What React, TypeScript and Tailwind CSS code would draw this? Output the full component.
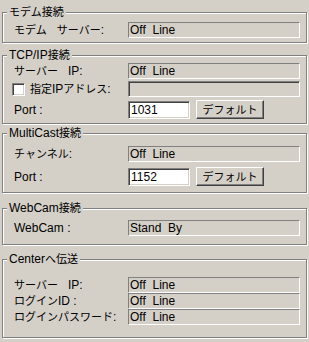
import React from 'react';

const sunken1 = 'border border-t-[#808080] border-l-[#808080] border-b-white border-r-white';
const sunken2 =
  'border border-t-[#808080] border-l-[#808080] border-b-white border-r-white shadow-[inset_1px_1px_0_#404040,inset_-1px_-1px_0_#d4d0c8]';

// kana/kanji runs are set a bit smaller so they sit as narrow as the original UI font
function Jp({ text }: { text: string }) {
  const parts = text.split(/([\u3000-\u9fff\uff00-\uffef]+)/);
  return (
    <>
      {parts.map((p, i) =>
        /[\u3000-\u9fff\uff00-\uffef]/.test(p) ? (
          <span key={i} className="text-[11px]">
            {p}
          </span>
        ) : (
          <React.Fragment key={i}>{p}</React.Fragment>
        )
      )}
    </>
  );
}

function Group({
  title,
  className,
  children,
}: {
  title: string;
  className: string;
  children: React.ReactNode;
}) {
  return (
    <fieldset
      className={`mx-[2px] border border-[#808080] shadow-[inset_1px_1px_0_#fff,1px_1px_0_#fff] ${className}`}
    >
      <legend className="ml-[4px] px-[2px] bg-[#d4d0c8] leading-[14px]">
        <Jp text={title} />
      </legend>
      {children}
    </fieldset>
  );
}

// read-only status box ("Off  Line")
function Status({ text }: { text: string }) {
  return (
    <div className={`w-[172px] h-[16px] ${sunken1} pl-[1px] leading-[14px] whitespace-pre`}>{text}</div>
  );
}

function Row({ label, children, className = '' }: { label: string; children: React.ReactNode; className?: string }) {
  return (
    <div className={`flex items-center pl-[11px] ${className}`}>
      <span className="w-[114px] leading-[14px] whitespace-pre">
        <Jp text={label} />
      </span>
      {children}
    </div>
  );
}

function PortRow({ value, className }: { value: string; className: string }) {
  return (
    <Row label="Port :" className={className}>
      <div className={`w-[62px] h-[18px] bg-white ${sunken2} pl-[2px] leading-[16px]`}>{value}</div>
      <button className="ml-[6px] w-[68px] h-[19px] bg-[#d4d0c8] border border-t-white border-l-white border-b-[#404040] border-r-[#404040] shadow-[inset_-1px_-1px_0_#808080] leading-[16px] text-center text-[11px]">
        デフォルト
      </button>
    </Row>
  );
}

export default function App() {
  return (
    <div className="w-[309px] h-[342px] bg-[#d4d0c8] text-black text-[12px] font-['Liberation_Sans','Noto_Sans_CJK_JP',sans-serif] pt-[5px] overflow-hidden">
      <Group title="モデム接続" className="pb-[4px]">
        <Row label="モデム   サーバー:" className="mt-[3px]">
          <Status text="Off  Line" />
        </Row>
      </Group>

      <Group title="TCP/IP接続" className="mt-[5px] pb-[4px]">
        <Row label="サーバー   IP:" className="mt-[1px]">
          <Status text="Off  Line" />
        </Row>
        <div className="flex items-center pl-[9px] mt-[2px]">
          <div className="w-[116px] flex items-center">
            <span className={`w-[13px] h-[13px] bg-white ${sunken2}`} />
            <span className="ml-[5px] leading-[14px]">
              <Jp text="指定IPアドレス:" />
            </span>
          </div>
          <div className={`w-[172px] h-[16px] ${sunken2}`} />
        </div>
        <PortRow value="1031" className="mt-[3px]" />
      </Group>

      <Group title="MultiCast接続" className="mt-[2px] pb-[6px]">
        <Row label="チャンネル:" className="mt-[6px]">
          <Status text="Off  Line" />
        </Row>
        <PortRow value="1152" className="mt-[5px]" />
      </Group>

      <Group title="WebCam接続" className="mt-[8px] pb-[8px]">
        <Row label="WebCam :" className="mt-[5px]">
          <Status text="Stand  By" />
        </Row>
      </Group>

      <Group title="Centerへ伝送" className="mt-[7px] pb-[12px]">
        <div className="mt-[11px]">
          <Row label="サーバー   IP:">
            <Status text="Off  Line" />
          </Row>
          <Row label="ログインID :">
            <Status text="Off  Line" />
          </Row>
          <Row label="ログインパスワード:">
            <Status text="Off  Line" />
          </Row>
        </div>
      </Group>
    </div>
  );
}
